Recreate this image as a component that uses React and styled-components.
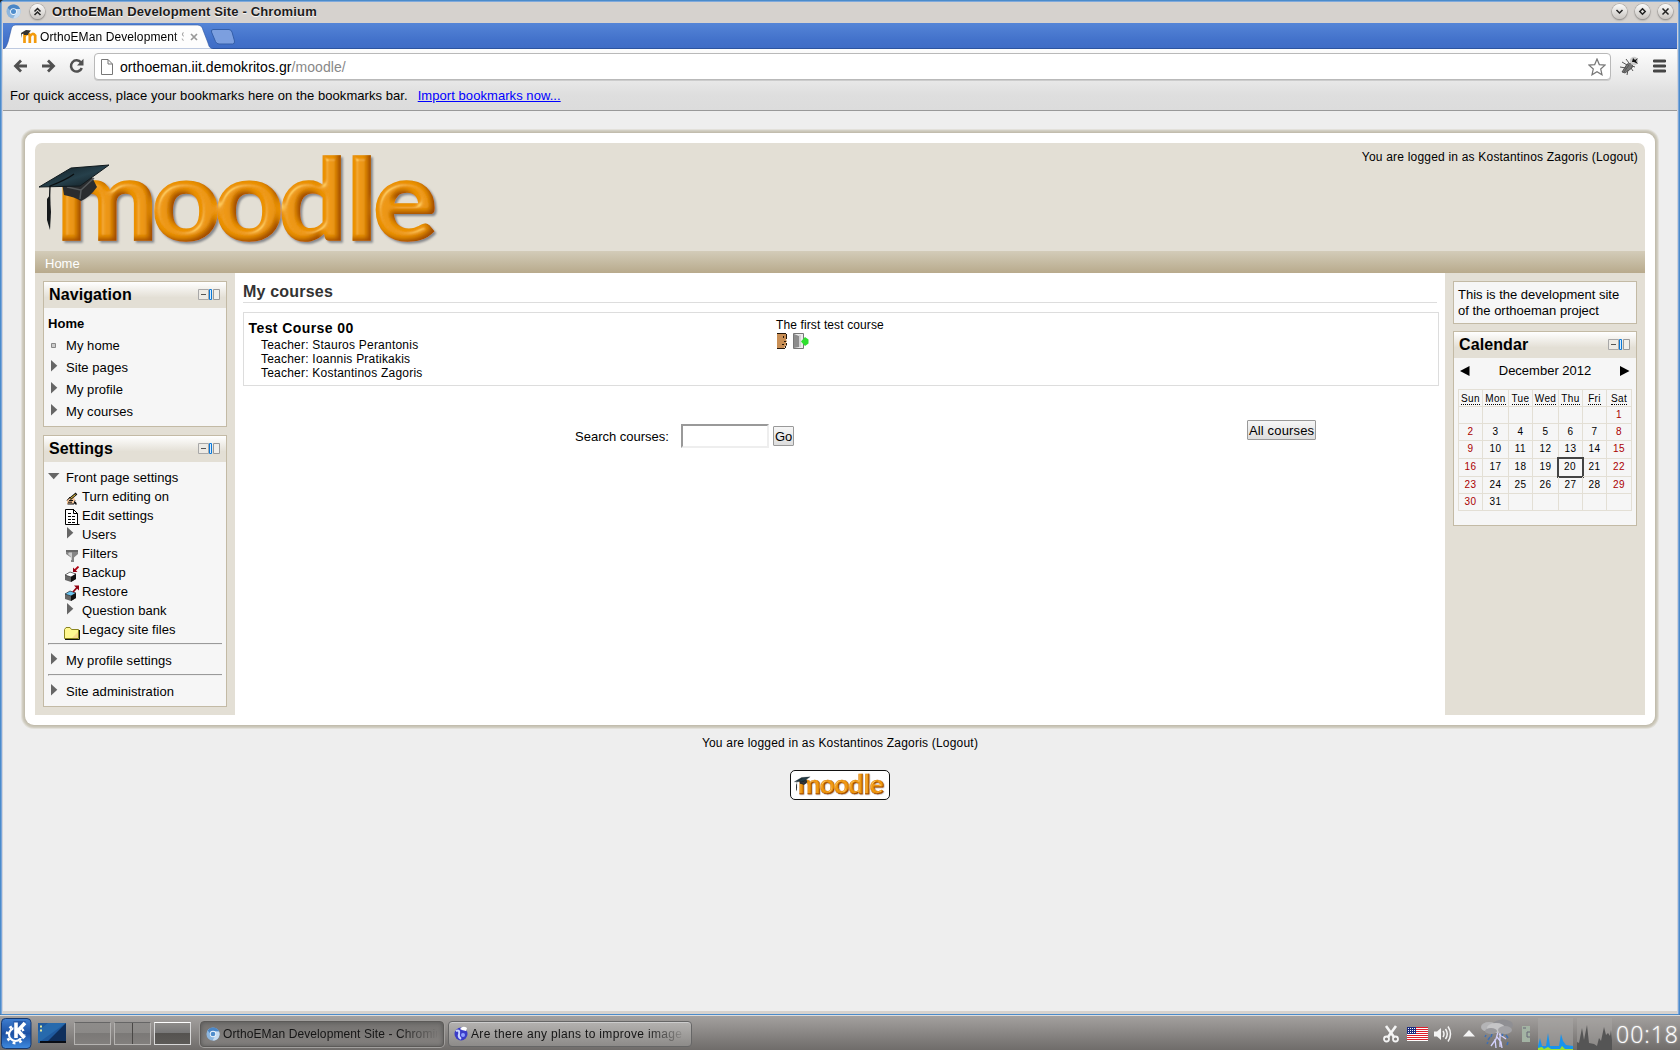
import React from 'react';
import styled, { createGlobalStyle, css } from 'styled-components';

const Global = createGlobalStyle`
  html, body { margin: 0; padding: 0; }
  body { width: 1680px; height: 1050px; overflow: hidden; background: #2b2622; }
  *, *::before, *::after { box-sizing: border-box; }
  body, button, input { font-family: "Liberation Sans", Arial, sans-serif; font-size: 13px; color: #000; }
  svg { display: block; flex: none; }
`;

const Desktop = styled.div`
  width: 1680px; height: 1050px; display: flex; flex-direction: column;
`;

/* ---------- window chrome ---------- */
const Window = styled.div`
  height: 1015px; display: flex; flex-direction: column;
  border: 1px solid #4b8bca; border-radius: 4px 4px 0 0;
  box-shadow: inset 1px 0 0 #7ba6db, inset 2px 0 0 #cfd3da, inset -1px 0 0 #7ba6db, inset -2px 0 0 #cfd3da;
  padding: 0 2px 3px; background: #d6d2ce;
`;
const TitleBar = styled.div`
  height: 22px; display: flex; align-items: center; padding: 0 5px 2px 4px; margin: 0 -1px;
  border-top: 1px solid #7fa9dc; background: #d6d2ce;
`;
const TitleText = styled.span`
  font-weight: bold; letter-spacing: 0.15px; margin-left: 7px; flex: 1; color: #1c1c1c;
  text-shadow: 0 1px 1px #fff; line-height: 18px; white-space: nowrap;
`;
const RoundButton = styled.span`
  width: 15px; height: 15px; border-radius: 50%; display: flex; align-items: center; justify-content: center;
  background: linear-gradient(#fbfbfa, #c9c5c1); box-shadow: 0 0 0 0.6px #a5a19d, 0 1px 2px #777;
  margin-left: ${(p) => p.$gap}px;
`;
const TabStrip = styled.div`
  height: 26px; display: flex; align-items: flex-start;
  background: linear-gradient(#5585d7, #4271ca 70%, #3f6dc6); border-bottom: 1px solid #2c549f;
`;
const Tab = styled.div`
  width: 210px; height: 26px; position: relative; display: flex; align-items: center; padding: 1px 0 0 18px;
  z-index: 1;
`;
const TabShape = styled.svg`position: absolute; left: 0; top: 0; z-index: -1;`;
const TabTitle = styled.span`
  width: 144px; margin: 0 6px 0 3px; font-size: 12px; letter-spacing: 0.1px; white-space: nowrap; overflow: hidden;
  line-height: 16px; mask-image: linear-gradient(90deg, #000 134px, transparent 147px);
`;
const NewTab = styled.svg`margin: 6px 0 0 -3px;`;
const Toolbar = styled.div`
  height: 62px; background: linear-gradient(#fdfdfd, #ededed 40%, #dedede 75%, #dcdcdc); border-bottom: 1px solid #999;
`;
const NavRow = styled.div`display: flex; align-items: center; height: 33px; padding: 2px 11px 1px 10px;`;
const NavIcon = styled.svg`margin-right: ${(p) => p.$mr || 0}px;`;
const UrlBar = styled.div`
  flex: 1; height: 27px; margin-top: 1px; border: 1px solid #b9b9b9; border-radius: 4px; background: #fff; display: flex; align-items: center;
  padding: 0 4px 0 6px; box-shadow: 0 1px 0 #ccc;
`;
const Url = styled.span`
  font-size: 14px; letter-spacing: 0.07px; margin-left: 7px; flex: 1; line-height: 18px;
  em { font-style: normal; color: #888; }
`;
const BookmarkBar = styled.div`
  height: 28px; padding: 5px 7px 0; display: flex; line-height: 18px; letter-spacing: 0.06px; white-space: nowrap;
  a { color: #00f; margin-left: 10px; text-decoration: underline; }
`;

/* ---------- page ---------- */
const Page = styled.div`
  flex: 1; background: #eee; padding: 22px 22px 0; display: flex; flex-direction: column; align-items: center;
`;
const Shell = styled.div`
  width: 1630px; height: 592px; background: #fff; border-radius: 9px; padding: 10px;
  box-shadow: 0 0 0 1px #c2bdae, 0 0 0 2px #cac6b8, 0 0 0 3px #d2cfc4, 0 0 0 4px #e2e0da;
`;
const Header = styled.header`
  height: 108px; background: #e3dfd5; border-radius: 7px 7px 0 0; display: flex; justify-content: space-between;
  padding: 5px 7px 0 3px;
`;
const LoginInfo = styled.div`
  font-size: 12px; letter-spacing: 0.2px; line-height: 17px; white-space: nowrap; margin-top: ${(p) => p.$mt || 0}px;
`;
const Crumbs = styled.nav`
  height: 22px; background: linear-gradient(#d3ccb9, #b8aa8c); color: #fff; padding: 2px 10px 0; line-height: 22px;
`;
const Columns = styled.div`display: grid; grid-template-columns: 200px 1fr 200px; height: 442px;`;
const Side = styled.aside`background: #e3dfd5; padding: 8px; display: flex; flex-direction: column; gap: ${(p) => p.$gap}px;`;
const Block = styled.section`border: 1px solid #c3baa5; background: #f6f6f6;`;
const BlockHead = styled.div`
  height: 26px; display: flex; align-items: center; justify-content: space-between; padding: 0 6px 1px 5px;
  background: linear-gradient(#fff, #e3dfd5 60%); font-size: 16px; font-weight: bold; line-height: 25px; letter-spacing: 0.1px;
`;
const NavBody = styled.div`padding: 5px 4px 3px; letter-spacing: 0.06px;`;
const Item = styled.div`
  height: ${(p) => p.$h || 22}px; line-height: ${(p) => p.$h || 22}px; display: flex; white-space: nowrap;
  ${(p) => p.$bold && css`font-weight: bold;`}
  margin-left: ${(p) => (p.$sub ? 15 : 0)}px;
`;
const FolderItem = styled(Item)`padding-top: 1px;`;
const Bullet = styled.span`
  width: ${(p) => p.$w || 18}px; flex: none; display: flex; padding-top: ${(p) => p.$pt || 0}px; padding-left: ${(p) => p.$pl || 0}px;
`;
const Rule = styled.div`
  height: 2px; border-top: 1px solid #9a9a9a; border-left: 1px solid #9a9a9a; border-bottom: 1px solid #eee; margin: ${(p) => p.$mt}px 0 5px;
`;
const Main = styled.main`padding: 0 6px 0 8px;`;
const Heading = styled.h2`
  margin: 0 2px 9px 0; height: 30px; padding-top: 9px; font-size: 16px; line-height: 20px; letter-spacing: 0.2px; color: #333; border-bottom: 1px solid #ddd;
`;
const CourseBox = styled.div`
  height: 74px; border: 1px solid #ddd; display: grid; grid-template-columns: 527px 1fr; padding: 5px 0 0 5px;
`;
const CourseName = styled.h3`margin: 2px 0; font-size: 14px; line-height: 16px; letter-spacing: 0.42px; margin-left: -0.5px;`;
const Teacher = styled.div`font-size: 12px; line-height: 14px; letter-spacing: 0.22px; padding-left: 12px;`;
const Summary = styled.div`font-size: 12px; line-height: 14px; letter-spacing: 0.12px;`;
const IconRow = styled.div`display: flex; gap: 5px; padding: 1px 0 0 1px;`;
const SearchRow = styled.div`display: flex; padding: 34px 0 0 332px; height: 70px;`;
const SearchForm = styled.div`display: flex; align-items: center; height: 32px;`;
const SearchInput = styled.input`
  width: 88px; height: 24px; margin: 0 4px 0 12px; border: 2px solid; border-color: #999 #eee #eee #999; background: #fff; padding: 0;
`;
const Button = styled.button`
  height: 20px; padding: 1px 1px 0; border: 1px solid #999; border-radius: 1px; line-height: 16px; width: ${(p) => p.$w}px; white-space: nowrap;
  background: linear-gradient(#f6f6f6, #ddd); margin-left: ${(p) => p.$ml || 0}px; letter-spacing: ${(p) => p.$ls || 0}px;
`;
const TextBody = styled.div`height: 41px; padding: 5px 4px; line-height: 16px; white-space: nowrap;`;
const CalBody = styled.div`padding: 0 4px 14px;`;
const MonthRow = styled.div`height: 31px; display: flex; align-items: flex-start; justify-content: space-between; padding: 5px 2px 0 2px; line-height: 15px;`;
const CalGrid = styled.div`
  display: grid; grid-template-columns: 24px 26px 24px 26px 24px 24px 25px; grid-template-rows: 17px 17px 17px 18px 18px 17px 17px;
  border: solid #e3dfd5; border-width: 1px 0 0 1px; width: 174px; font-size: 10px;
`;
const Cell = styled.div`
  border: solid #e3dfd5; border-width: 0 1px 1px 0; text-align: center; line-height: 16px; letter-spacing: ${(p) => (p.$head ? 0.35 : 0.55)}px;
  ${(p) => p.$red && css`color: #a00;`}
  ${(p) => p.$today && css`outline: 2px solid #444; outline-offset: -1px; margin: -1px 0 0 -1px; padding-top: 1px; border-color: transparent;`}
`;
const DayName = styled.abbr`border-bottom: 1px dotted #000; line-height: 11px; display: inline-block; margin-top: 3px; height: 12px;`;
const Badge = styled.div`
  margin-top: 18px; width: 100px; height: 30px; border: 1px solid #111; border-radius: 5px; background: #fff; padding: 2px 3px;
`;

/* ---------- task bar ---------- */
const Taskbar = styled.div`
  height: 35px; background: linear-gradient(#a3a09e, #8c8987 45%, #6f6c6a); border-top: 1px solid #ddd; display: flex; align-items: center;
  padding: 1px 2px 0 1px;
`;
const Pager = styled.div`
  width: 37px; height: 23px; margin-left: ${(p) => p.$ml}px; border: 1px solid ${(p) => (p.$on ? '#d8d8d8' : '#b5b3b1')};
  border-top-color: ${(p) => (p.$on ? '#fff' : '#666')};
  background: linear-gradient(#8e8c8a, ${(p) => (p.$on ? '#777' : '#8b8987')} 48%, ${(p) => (p.$on ? '#555350' : '#7b7977')} 50%, ${(p) => (p.$on ? '#5d5b58' : '#827f7d')});
  display: flex; justify-content: center;
  i { width: 1px; background: #4a4846; display: ${(p) => (p.$split ? 'block' : 'none')}; }
`;
const Task = styled.div`
  width: 244px; height: 26px; margin-left: ${(p) => p.$ml}px; border-radius: 4px; display: flex; align-items: center; padding: 0 5px;
  border: 1px solid ${(p) => (p.$active ? '#5c5a58' : '#666')};
  background: ${(p) => (p.$active ? 'linear-gradient(#747270,#84817f)' : 'linear-gradient(#b4b2b0,#8d8b89)')};
  box-shadow: ${(p) => (p.$active ? 'inset 0 0 4px #555, 0 0 0 1px #a19f9d' : 'inset 0 1px 0 #ccc')};
`;
const TaskText = styled.span`
  margin-left: 3px; font-size: 12px; letter-spacing: ${(p) => p.$ls}px; width: 214px; white-space: nowrap; overflow: hidden; line-height: 16px; color: #151515;
  mask-image: linear-gradient(90deg, #000 175px, transparent 216px);
`;
const Tray = styled.div`margin-left: auto; display: flex; align-items: center;`;
const TrayItem = styled.span`margin-right: ${(p) => p.$mr}px;`;
const Clock = styled.span`
  font-family: "Open Sans", sans-serif; font-weight: 300; font-size: 23px; letter-spacing: 1px; line-height: 28px; color: #fff; text-shadow: 0 0 2px #ddd; width: 62px; white-space: nowrap;
`;

/* ---------- drawings ---------- */
function MoodleLogo({ width, height, id }) {
  return (
    <svg width={width} height={height} viewBox="0 0 406 103">
      <defs>
        <filter id={id} x="-5%" y="-5%" width="112%" height="112%">
          <feGaussianBlur in="SourceAlpha" stdDeviation="2.6" result="b" />
          <feSpecularLighting in="b" surfaceScale="6" specularConstant="0.85" specularExponent="20" lightingColor="#ffcf5e" result="hi">
            <feDistantLight azimuth="225" elevation="36" />
          </feSpecularLighting>
          <feComposite in="hi" in2="SourceAlpha" operator="in" result="hi2" />
          <feOffset in="b" dx="-4.5" dy="-3" result="off" />
          <feComposite in="SourceAlpha" in2="off" operator="out" result="edge" />
          <feFlood floodColor="#9a4300" floodOpacity="0.95" />
          <feComposite in2="edge" operator="in" result="dark" />
          <feDropShadow in="SourceGraphic" dx="2" dy="2" stdDeviation="1.2" floodColor="#6d7078" floodOpacity="0.8" result="base" />
          <feMerge>
            <feMergeNode in="base" />
            <feMergeNode in="dark" />
            <feMergeNode in="hi2" />
          </feMerge>
        </filter>
        <linearGradient id={`${id}c`} x1="0" y1="0" x2="1" y2="1">
          <stop offset="0" stopColor="#0d171c" />
          <stop offset="0.55" stopColor="#26404b" />
          <stop offset="1" stopColor="#0c1317" />
        </linearGradient>
      </defs>
      <g filter={`url(#${id})`}>
        <text
          transform="scale(1.06 1)" x="17.500 107 166.500 227 291 316" y="92"
          fill="#ec9300" stroke="#ec9300" strokeWidth="1.600" fontFamily="Lato, sans-serif" fontWeight="900" fontSize="113"
        >
          moodle
        </text>
      </g>
      <path d="M24 35 L26 47 Q37 49 43 53 Q52 49 59 39 L52 25 Z" fill="#2a2c2e" />
      <path d="M29 39 L43 42 L42 51 M43 42 L56 30" stroke="#55595b" fill="none" strokeWidth="1.5" />
      <path d="M1 39 L33 20 L71 17 L42 38 Z" fill={`url(#${id}c)`} stroke="#10191d" strokeWidth="1" />
      <path d="M36 26 Q28 32 12 38 L11 66" stroke="#0b0f11" strokeWidth="1.3" fill="none" />
      <path d="M9 51 L12 47 L13 64 L12 82 L9 72 Z" fill="#15191b" />
    </svg>
  );
}

const Chromium = ({ size }) => (
  <svg width={size} height={size} viewBox="0 0 16 16">
    <circle cx="8" cy="8" r="7.5" fill="#8db6de" />
    <path d="M1.800 3.900A7.500 7.500 0 0 1 15 5.200H8L5.500 8Z" fill="#4a86c6" />
    <path d="M15 5.200A7.500 7.500 0 0 1 7.500 15.500L10.800 9.500 10.500 5.200Z" fill="#c7dcf1" />
    <circle cx="8" cy="8" r="3.6" fill="#f2f7fc" />
    <circle cx="8" cy="8" r="2.7" fill="#4f8dcc" />
  </svg>
);

const Glyph = ({ d }) => (
  <svg width="9" height="9" viewBox="0 0 9 9"><path d={d} fill="none" stroke="#222" strokeWidth="1.5" /></svg>
);

const BlockTools = () => (
  <svg width="22" height="11" viewBox="0 0 22 11">
    <path d="M.5 .5H10.5V10.5H.5Z" fill="#eceae5" stroke="#a8a8a8" />
    <path d="M3 5.5H8" stroke="#555" />
    <path d="M11.5 .5H13.5V10.5H11.5Z" fill="#d8ecff" stroke="#0a78d8" />
    <path d="M15.5 .5H21.5V10.5H15.5Z" fill="#f0eeea" stroke="#999" />
  </svg>
);

const Closed = () => <svg width="7" height="12" viewBox="0 0 7 12"><path d="M0 0L6.3 5.7 0 11.5Z" fill="#666" /></svg>;
const Open = () => <svg width="12" height="7" viewBox="0 0 12 7"><path d="M0 0H11.5L5.7 6.3Z" fill="#666" /></svg>;
const Dot = () => <svg width="5" height="5" viewBox="0 0 5 5"><path d="M.5 .5H4.5V4.5H.5Z" fill="#ccc" stroke="#888" /></svg>;

const Hand = () => (
  <svg width="16" height="16" viewBox="0 0 16 16">
    <path d="M3 10L6 7H10L11 10 9 14H3Z" fill="#f7c79a" />
    <path d="M3 10.500L6 7M3.500 14H10L11 10.500M4 12.200H8M5 10.500H9" stroke="#111" fill="none" />
    <path d="M6 9L12.500 3.500" stroke="#111" strokeWidth="2.600" /><path d="M6.500 8.500L11.500 4.500" stroke="#ffd83f" />
    <path d="M10 12H12L13 14.500H11Z" fill="#111" />
  </svg>
);
const Doc = () => (
  <svg width="16" height="16" viewBox="0 0 16 16">
    <path d="M1.500 .5H9.500L13.500 4.500V15.500H1.500Z" fill="#fff" stroke="#000" />
    <path d="M9.500 0V4.500H13.500M13 15.500H15.500" stroke="#000" fill="none" />
    <path d="M4 4.500H8M4 7.500H11M4 10.500H11M4 13.500H11" stroke="#000" strokeDasharray="3 1" />
  </svg>
);
const Funnel = () => (
  <svg width="16" height="16" viewBox="0 0 16 16">
    <path d="M2 3H14V7L10 10.500V15H7V10.500L2 7Z" fill="#858585" />
    <path d="M2 3H14V5H2Z" fill="#686868" /><path d="M5 5.500H8V13H7V10L4 7Z" fill="#ccc" />
  </svg>
);
const Cube = ({ top, out }) => (
  <svg width="16" height="16" viewBox="0 0 16 16">
    <path d="M1 9L6 6 12 8 12 13 7 16 1 14Z" fill="#666" />
    <path d="M1 9L6 6 12 8 7 11Z" fill={top} stroke="#222" strokeWidth=".6" />
    <path d="M7 11V16L12 13V8Z" fill="#111" />
    {out
      ? <><path d="M9 7L13.500 2" stroke="#900010" strokeWidth="1.800" /><path d="M10 .5H15V5.500Z" fill="#900010" /></>
      : <><path d="M10 5L14.500 .5" stroke="#b00010" strokeWidth="1.800" /><path d="M9 1.500V6H13.500Z" fill="#900010" /></>}
  </svg>
);
const Folder = () => (
  <svg width="16" height="16" viewBox="0 0 16 16">
    <path d="M.5 5.500L2 3.500H6L7.500 5.500H14.500V14.500H.5Z" fill="#fff790" stroke="#8a8420" />
    <path d="M8 14L14 8V14Z" fill="#f8d98a" /><path d="M1 15.500H15.500V6" stroke="#111" fill="none" />
  </svg>
);
const Face = () => (
  <svg width="11" height="16" viewBox="0 0 11 16">
    <path d="M0 1H9V6L10 9H9V12L7 15H0Z" fill="#c98f55" />
    <path d="M0 .5H9M9.500 1V6M9.500 10V12.500M8.500 13V15M0 15.500H8" stroke="#24160a" fill="none" />
    <path d="M6 3H7V5H6ZM7 8H9V9H7V8ZM5 11H7V12H5Z" fill="#24160a" />
  </svg>
);
const Door = () => (
  <svg width="16" height="16" viewBox="0 0 16 16">
    <path d="M.5 .5H10.500V15.500H.5Z" fill="#ececec" stroke="#777" />
    <path d="M1 1L6 3V14L1 15Z" fill="#8d8d8d" /><path d="M7 2V14" stroke="#bbb" />
    <path d="M15.500 6.500L12 4 8 8.500 12 13 15.500 10.500Z" fill="#2ee02e" />
  </svg>
);

const TINY_M = (
  <svg width="16" height="16" viewBox="0 0 16 16">
    <path d="M3.500 14V5M3.500 7.500Q6 3 8.800 6V14M8.800 7.500Q11.500 3 14.200 6.500V14" stroke="#f29a0c" strokeWidth="2.700" fill="none" />
    <path d="M0 4L5 1 10 1.500 7.500 4.500 7 6H3L2.500 4.800 1 5V9" fill="#333" />
  </svg>
);

const SUB = [
  ['Turn editing on', <Hand key="i" />, 3], ['Edit settings', <Doc key="i" />, 3], ['Users', null, 0], ['Filters', <Funnel key="i" />, 3],
  ['Backup', <Cube key="i" top="#fff" />, 3], ['Restore', <Cube key="i" top="#6bc4f0" out />, 3], ['Question bank', null, 0], ['Legacy site files', <Folder key="i" />, 4],
];

function NavigationBlock() {
  return (
    <Block>
      <BlockHead>Navigation<BlockTools /></BlockHead>
      <NavBody>
        <Item $bold>Home</Item>
        <Item><Bullet $pt={8} $pl={3}><Dot /></Bullet>My home</Item>
        {['Site pages', 'My profile', 'My courses'].map((t) => (
          <Item key={t}><Bullet $pt={3} $pl={3}><Closed /></Bullet>{t}</Item>
        ))}
      </NavBody>
    </Block>
  );
}

function SettingsBlock() {
  return (
    <Block>
      <BlockHead>Settings<BlockTools /></BlockHead>
      <NavBody>
        <FolderItem $h={20}><Bullet $pt={5}><Open /></Bullet>Front page settings</FolderItem>
        {SUB.map(([t, icon, pt]) => (
          <Item key={t} $h={19} $sub>
            <Bullet $w={19} $pt={icon ? pt : 2} $pl={icon ? 1 : 4}>{icon || <Closed />}</Bullet>{t}
          </Item>
        ))}
        <Rule $mt={4} />
        <Item><Bullet $pt={3} $pl={3}><Closed /></Bullet>My profile settings</Item>
        <Rule $mt={2} />
        <Item><Bullet $pt={3} $pl={3}><Closed /></Bullet>Site administration</Item>
      </NavBody>
    </Block>
  );
}

const DAYS = ['Sun', 'Mon', 'Tue', 'Wed', 'Thu', 'Fri', 'Sat'];

function Calendar() {
  const cells = Array.from({ length: 42 }, (_, i) => (i - 5 > 0 && i - 5 <= 31 ? i - 5 : ''));
  return (
    <Block>
      <BlockHead>Calendar<BlockTools /></BlockHead>
      <CalBody>
        <MonthRow>
          <svg width="10" height="15" viewBox="0 0 10 15"><path d="M0 8L9.500 3V13Z" /></svg>
          December 2012
          <svg width="10" height="15" viewBox="0 0 10 15"><path d="M9.500 8L0 3V13Z" /></svg>
        </MonthRow>
        <CalGrid>
          {DAYS.map((d) => <Cell key={d} $head><DayName>{d}</DayName></Cell>)}
          {cells.map((n, i) => <Cell key={i} $red={i % 7 === 0 || i % 7 === 6} $today={n === 20}>{n}</Cell>)}
        </CalGrid>
      </CalBody>
    </Block>
  );
}

const LOGIN = 'You are logged in as Kostantinos Zagoris (Logout)';

function BrowserChrome() {
  return (
    <>
      <TitleBar>
        <Chromium size={15} />
        <RoundButton $gap={9}><Glyph d="M1.500 4.500L4.500 1.500 7.500 4.500M1.500 8L4.500 5 7.500 8" /></RoundButton>
        <TitleText>OrthoEMan Development Site - Chromium</TitleText>
        <RoundButton $gap={0}><Glyph d="M1.500 3L4.500 6 7.500 3" /></RoundButton>
        <RoundButton $gap={8}><Glyph d="M4.500 1.800L7.200 4.500 4.500 7.200 1.800 4.500Z" /></RoundButton>
        <RoundButton $gap={8}><Glyph d="M1.500 1.500L7.500 7.500M7.500 1.500L1.500 7.500" /></RoundButton>
      </TitleBar>
      <TabStrip>
        <Tab>
          <TabShape width="212" height="26" viewBox="0 0 212 26">
            <path d="M0 26C3 25 3 24 5 19L8 7C9 3 10 2 14 2H193C197 2 199 3 200 7L205 20C206 24 207 25 210 26Z" fill="#fdfdfd" stroke="#2c549f" strokeOpacity=".6" />
          </TabShape>
          {TINY_M}
          <TabTitle>OrthoEMan Development Site</TabTitle>
          <svg width="8" height="8" viewBox="0 0 8 8"><path d="M1 1L7 7M7 1L1 7" stroke="#999" strokeWidth="1.700" /></svg>
        </Tab>
        <NewTab width="26" height="16" viewBox="0 0 26 16">
          <path d="M3 .5H19Q21 .5 22 3L24.500 12Q25 15 22.500 15H9Q6.500 15 5.500 12.500L1.500 3Q1 .5 3 .5Z" fill="#7c9fdf" stroke="#355fa9" />
        </NewTab>
      </TabStrip>
      <Toolbar>
        <NavRow>
          <NavIcon $mr={13} width="15" height="16" viewBox="0 0 15 16"><path d="M8 2.500L2.500 8 8 13.500M2 8H14" fill="none" stroke="#505050" strokeWidth="2.800" /></NavIcon>
          <NavIcon $mr={13} width="15" height="16" viewBox="0 0 15 16"><path d="M7 2.500L12.500 8 7 13.500M13 8H1" fill="none" stroke="#505050" strokeWidth="2.800" /></NavIcon>
          <NavIcon $mr={10} width="15" height="16" viewBox="0 0 15 16">
            <path d="M12 4.500A5.600 5.600 0 1 0 12.800 10" fill="none" stroke="#505050" strokeWidth="2.500" /><path d="M14.500 .8V7.500H8Z" fill="#505050" />
          </NavIcon>
          <UrlBar>
            <svg width="12" height="16" viewBox="0 0 12 16"><path d="M.5 .5H7L11.500 5V15.500H.5ZM7 .5V5H11.500" fill="#fff" stroke="#777" /></svg>
            <Url>orthoeman.iit.demokritos.gr<em>/moodle/</em></Url>
            <svg width="18" height="18" viewBox="0 0 18 18"><path d="M9 1L11.300 6.600 17 7.100 12.700 11 14 16.800 9 13.700 4 16.800 5.300 11 1 7.100 6.700 6.600Z" fill="#fff" stroke="#777" strokeWidth="1.200" /></svg>
          </UrlBar>
          <NavIcon $mr={14} width="28" height="22" viewBox="-9 0 28 22">
            <path d="M2 17L7 9 13 8 12 13 5 18Z" fill="#777" stroke="#333" strokeWidth=".7" />
            <path d="M0 12L6 13M2 7L7 10M6 4L9 8M7 20L8 15M13 16L11 13M15 12L12 11M4 17L9 10" stroke="#555" />
            <circle cx="14" cy="6" r="4.200" fill="#ccc" /><path d="M13 3L15 5 18 3 16 6 18 9 14 7 12 7Z" fill="#111" />
          </NavIcon>
          <svg width="13" height="14" viewBox="0 0 13 14"><path d="M1 2H12M1 7H12M1 12H12" stroke="#454545" strokeWidth="2.800" strokeLinecap="round" /></svg>
        </NavRow>
        <BookmarkBar>For quick access, place your bookmarks here on the bookmarks bar. <a>Import bookmarks now...</a></BookmarkBar>
      </Toolbar>
    </>
  );
}

function Panel() {
  return (
    <Taskbar>
      <svg width="31" height="31" viewBox="0 0 31 31">
        <defs><linearGradient id="kde" x2="0" y2="1"><stop stopColor="#3f7ed0" /><stop offset=".5" stopColor="#1c51a4" /><stop offset="1" stopColor="#3f8be0" /></linearGradient></defs>
        <rect x=".5" y=".5" width="29.500" height="30" rx="4" fill="url(#kde)" stroke="#16396f" />
        <circle cx="14.500" cy="16.500" r="6.500" fill="none" stroke="#fff" strokeWidth="2.200" />
        <circle cx="14.500" cy="16.500" r="8.600" fill="none" stroke="#fff" strokeWidth="2.600" strokeDasharray="2.800 3.950" />
        <path d="M12.500 3H25L20 11 25 20H12.500Z" fill="#2558a8" />
        <path d="M15 4.500V20M24 5L17 12.500 23.500 20" stroke="#fff" strokeWidth="3.600" fill="none" />
      </svg>
      <NavIcon width="34" height="22" viewBox="-6 0 34 22">
        <rect width="28" height="20" fill="#1f5a9e" /><path d="M28 0V20H8Z" fill="#0f2f5c" /><path d="M0 20L28 0H10L0 8Z" fill="#2d74b8" opacity=".6" />
        <path d="M2 3.500H4M2 7.500H4" stroke="#dfe8a0" strokeWidth="2" /><rect x="2" y="18" width="26" height="2" fill="#080c14" />
      </NavIcon>
      <Pager $ml={8}><i /></Pager>
      <Pager $ml={3} $split><i /></Pager>
      <Pager $ml={3} $on><i /></Pager>
      <Task $ml={9} $active><Chromium size={14} /><TaskText $ls={0.1}>OrthoEMan Development Site - Chromium</TaskText></Task>
      <Task $ml={4}>
        <svg width="14" height="15" viewBox="0 0 14 15"><circle cx="7" cy="8" r="6.500" fill="#3a3cc8" /><path d="M2 5Q6 3 5 8 4 11 7 13" stroke="#c9d4ff" strokeWidth="2" fill="none" /><circle cx="9" cy="9" r="2" fill="#8fa0ff" /><path d="M6 3Q9-1 13 2L12 5 8 4Z" fill="#fff" /></svg>
        <TaskText $ls={0.33}>Are there any plans to improve image handling</TaskText>
      </Task>
      <Tray>
        <TrayItem $mr={8}>
          <svg width="16" height="18" viewBox="0 0 16 18"><path d="M3 1L11 12M13 1L5 12" stroke="#f4f4f4" strokeWidth="2.600" /><circle cx="3.500" cy="14" r="2.500" fill="none" stroke="#f4f4f4" strokeWidth="1.800" /><circle cx="12.500" cy="14" r="2.500" fill="none" stroke="#f4f4f4" strokeWidth="1.800" /></svg>
        </TrayItem>
        <TrayItem $mr={5}>
          <svg width="21" height="14" viewBox="0 0 21 14"><rect width="21" height="14" fill="#fff" /><path d="M0 .5H21M0 2.500H21M0 4.500H21M0 6.500H21M0 8.500H21M0 10.500H21M0 12.500H21" stroke="#dc1f2b" /><rect width="9" height="7" fill="#1b2c80" /><path d="M1 1.500H8M1 3.500H8M1 5.500H8" stroke="#fff" strokeDasharray="1 1" /></svg>
        </TrayItem>
        <TrayItem $mr={11}>
          <svg width="19" height="18" viewBox="0 0 19 18"><path d="M1 6.500H4L8 3V15L4 11.500H1Z" fill="#f4f4f4" /><path d="M10 6Q12 9 10 12M12.500 4Q16 9 12.500 14M15 1.500Q20 9 15 16.500" stroke="#f4f4f4" strokeWidth="1.500" fill="none" /></svg>
        </TrayItem>
        <TrayItem $mr={6}><svg width="12" height="9" viewBox="0 0 12 9"><path d="M0 7.500L6 1 12 7.500Z" fill="#f4f4f4" /></svg></TrayItem>
        <TrayItem $mr={8}>
          <svg width="33" height="30" viewBox="0 0 33 30">
            <path d="M17 13L15 20 10 27M16 18L20 23 21 29M18 15L25 20M14 20L15 29M19 14V28" stroke="#d4d2ff" strokeWidth="1.300" fill="none" />
            <path d="M5 16L4 18M9 18L7 21M25 16L27 19M22 14L21 17M7 23L6 25M27 23L26 26M11 15L10 18" stroke="#3d6fb5" strokeWidth="1.500" />
            <ellipse cx="8" cy="8" rx="8" ry="5" fill="#b4b4b6" /><ellipse cx="22" cy="6" rx="10" ry="5.500" fill="#8f8f93" /><ellipse cx="15" cy="9" rx="9" ry="5" fill="#c5c5c7" /><ellipse cx="24" cy="11" rx="7" ry="4" fill="#a2a2a6" /><ellipse cx="10" cy="12" rx="6" ry="3" fill="#99999d" />
          </svg>
        </TrayItem>
        <TrayItem $mr={8}><svg width="8" height="16" viewBox="0 0 8 16"><rect width="8" height="16" fill="#a3b3a3" /><path d="M8 6H5V11H8M1 2H4" stroke="#667" fill="none" /></svg></TrayItem>
        <TrayItem $mr={4}>
          <svg width="35" height="32" viewBox="0 0 35 32"><rect width="35" height="32" fill="#aaa8a6" opacity=".55" /><path d="M0 32V28L2 20 4 28H8L10 15 12 28H21L23 16 25 23 28 27 35 28V32Z" fill="#1893ee" /><path d="M0 32V30L4 29 6 31 10 29 13 31H22L24 28 27 31H35V32Z" fill="#9be030" /></svg>
        </TrayItem>
        <TrayItem $mr={4}>
          <svg width="35" height="32" viewBox="0 0 35 32"><rect width="35" height="32" fill="#aaa8a6" opacity=".45" /><path d="M0 32V24L2 25 5 10 7 22 10 7 12 25 17 26 20 28 22 20 24 23 27 9 29 17 31 15 33 18 34 12 35 22V32Z" fill="#555" /></svg>
        </TrayItem>
        <Clock>00:18</Clock>
      </Tray>
    </Taskbar>
  );
}

export default function App() {
  return (
    <Desktop>
      <Global />
      <Window>
        <BrowserChrome />
        <Page>
          <Shell>
            <Header>
              <MoodleLogo width={406} height={103} id="bevelLarge" />
              <LoginInfo $mt={1}>{LOGIN}</LoginInfo>
            </Header>
            <Crumbs>Home</Crumbs>
            <Columns>
              <Side $gap={8}><NavigationBlock /><SettingsBlock /></Side>
              <Main>
                <Heading>My courses</Heading>
                <CourseBox>
                  <div>
                    <CourseName>Test Course 00</CourseName>
                    <Teacher>Teacher: Stauros Perantonis</Teacher>
                    <Teacher>Teacher: Ioannis Pratikakis</Teacher>
                    <Teacher>Teacher: Kostantinos Zagoris</Teacher>
                  </div>
                  <div>
                    <Summary>The first test course</Summary>
                    <IconRow><Face /><Door /></IconRow>
                  </div>
                </CourseBox>
                <SearchRow>
                  <SearchForm>Search courses:<SearchInput /><Button $w={21}>Go</Button></SearchForm>
                  <Button $w={69} $ml={453} $ls={0.15}>All courses</Button>
                </SearchRow>
              </Main>
              <Side $gap={7}>
                <Block><TextBody>This is the development site<br />of the orthoeman project</TextBody></Block>
                <Calendar />
              </Side>
            </Columns>
          </Shell>
          <LoginInfo $mt={10}>{LOGIN}</LoginInfo>
          <Badge><MoodleLogo width={92} height={23.3} id="bevelSmall" /></Badge>
        </Page>
      </Window>
      <Panel />
    </Desktop>
  );
}
